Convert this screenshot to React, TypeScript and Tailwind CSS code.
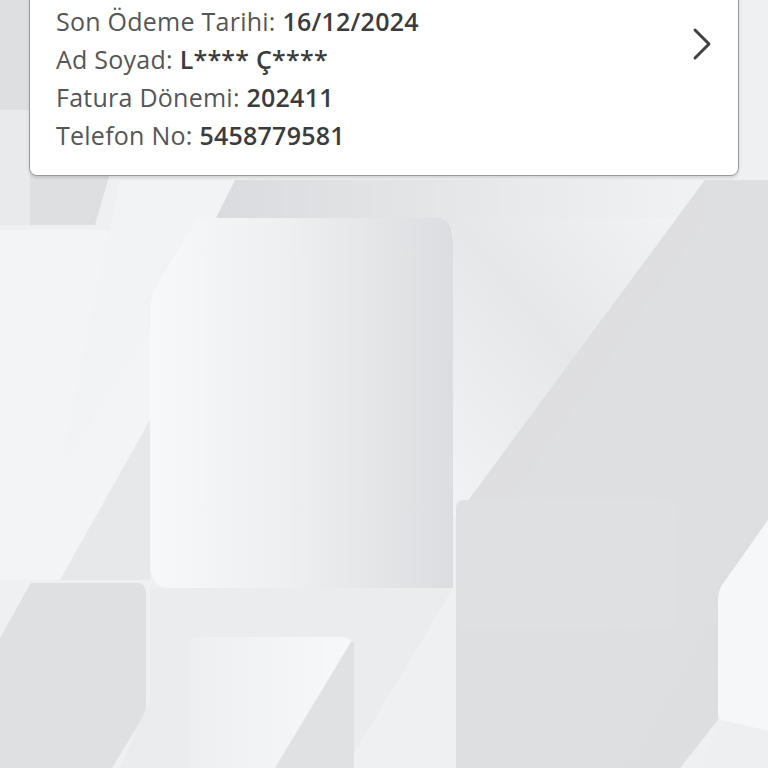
const rows = [
  { label: 'Son Ödeme Tarihi:', value: '16/12/2024' },
  { label: 'Ad Soyad:', value: 'L**** Ç****' },
  { label: 'Fatura Dönemi:', value: '202411' },
  { label: 'Telefon No:', value: '5458779581' },
];

function Backdrop() {
  return (
    <svg className="absolute inset-0 w-full h-full" viewBox="0 0 768 768" preserveAspectRatio="none">
      <defs>
        <linearGradient id="card" x1="0" y1="0" x2="1" y2="0">
          <stop offset="0" stopColor="#f7f8f9" />
          <stop offset="0.45" stopColor="#eeeff0" />
          <stop offset="1" stopColor="#dcdde0" />
        </linearGradient>
        <linearGradient id="dark" x1="0" y1="0" x2="1" y2="1">
          <stop offset="0" stopColor="#dfe0e2" />
          <stop offset="1" stopColor="#dddee0" />
        </linearGradient>
        <linearGradient id="band" x1="1" y1="0" x2="0" y2="1">
          <stop offset="0" stopColor="#f3f4f5" />
          <stop offset="0.5" stopColor="#e6e7e9" />
          <stop offset="1" stopColor="#f2f3f4" />
        </linearGradient>
        <linearGradient id="topdark" x1="0" y1="0" x2="1" y2="0">
          <stop offset="0" stopColor="#dadbde" />
          <stop offset="1" stopColor="#f1f2f3" />
        </linearGradient>
        <linearGradient id="lowlight" x1="0" y1="0" x2="1" y2="0">
          <stop offset="0" stopColor="#eeeff1" />
          <stop offset="1" stopColor="#f7f8f9" />
        </linearGradient>
      </defs>
      <rect width="768" height="768" fill="#eff0f1" />
      <polygon points="0,230 150,230 150,580 0,580" fill="#f3f4f5" />
      <polygon points="60,580 150,420 150,580" fill="#e7e8ea" />
      <polygon points="0,0 160,0 95,225 0,225" fill="#dedfe1" />
      <polygon points="0,110 30,110 30,225 0,225" fill="#e9eaeb" />
      <polygon points="120,180 240,180 150,330 60,470" fill="#f2f3f4" />
      <polygon points="235,180 705,180 705,230 210,230" fill="url(#topdark)" />
      <rect x="453" y="218" width="252" height="300" fill="url(#band)" />
      <path d="M705,180 L768,180 L768,520 L720,590 L718,720 L680,768 L456,768 L456,517 Z" fill="url(#dark)" />
      <path d="M456,517 L705,180 L705,200 Q705,220 700,228 L470,560 L470,628 L456,628 Z" fill="#dddee0" opacity="0.6" />
      <rect x="456" y="500" width="220" height="128" rx="8" fill="#dfe0e2" />
      <path d="M200,218 L437,218 Q453,218 453,245 L453,588 L168,588 Q150,588 150,560 L150,310 Q150,295 160,280 L195,222 Q197,218 200,218 Z" fill="url(#card)" />
      <polygon points="150,588 453,588 350,760 350,640 190,640 190,768 120,768 150,700" fill="#ebecee" />
      <path d="M32,583 L138,583 Q146,583 146,595 L146,705 Q146,712 140,722 L112,768 L0,768 L0,638 L28,588 Q30,583 32,583 Z" fill="#dfe0e2" />
      <path d="M196,637 L340,637 Q348,637 351,642 L275,768 L190,768 L190,645 Q190,637 196,637 Z" fill="url(#lowlight)" />
      <polygon points="351,642 354,642 354,768 275,768" fill="#e0e1e3" />
      <path d="M768,560 L768,731 L722,720 Q718,718 718,710 L718,600 Q718,592 722,585 L768,520 Z" fill="#f6f7f8" />
      <polygon points="722,720 768,731 768,768 700,768" fill="#eeeff0" />
    </svg>
  );
}

export default function App() {
  return (
    <div className="relative w-full h-[768px] overflow-hidden" style={{ fontFamily: '"Open Sans", sans-serif' }}>
      <Backdrop />
      <div className="relative mx-[29px] mt-[-12px] flex items-start justify-between rounded-lg border border-[#9a9a9a] bg-white pl-[26px] pr-[26px] pt-[13px] pb-[21px] shadow-[0_2px_3px_rgba(0,0,0,0.12)]">
        <div className="flex flex-col">
          {rows.map((r) => (
            <p key={r.label} className="text-[25px] leading-[38px] text-[#555657] tracking-[0.25px]">
              {r.label} <span className="font-semibold text-[#3b3c3d]">{r.value}</span>
            </p>
          ))}
        </div>
        <svg className="mt-[25px] text-[#404142]" width="20" height="34" viewBox="0 0 20 34" fill="none">
          <polyline points="3,3 17,17 3,31" stroke="currentColor" strokeWidth="3" strokeLinecap="round" strokeLinejoin="round" />
        </svg>
      </div>
    </div>
  );
}
